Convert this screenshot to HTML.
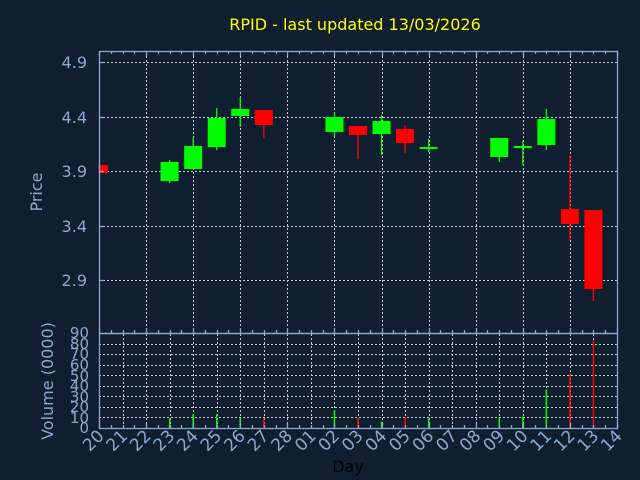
<!DOCTYPE html>
<html><head><meta charset="utf-8"><style>
html,body{margin:0;padding:0;background:#0f1f2f;}
svg{display:block}
text{font-family:"DejaVu Sans","Liberation Sans",sans-serif;}
</style></head><body>
<svg id="s" width="640" height="480" xmlns="http://www.w3.org/2000/svg">
<rect width="640" height="480" fill="#0f1f2f"/>
<g id="grid"></g>
<g id="cand"></g>
<rect x="99.5" y="51.5" width="518" height="282" fill="none" stroke="#8aa8d0" stroke-width="1.3"/>
<rect x="99.5" y="333.5" width="518" height="95" fill="none" stroke="#8aa8d0" stroke-width="1.3"/>
<g id="ticks"></g>
<text x="355" y="30" fill="#ffff00" font-size="16" text-anchor="middle">RPID - last updated 13/03/2026</text>
<g fill="#8aa8d0" font-size="16" text-anchor="end">
<text x="87" y="68">4.9</text><text x="87" y="123">4.4</text><text x="87" y="177">3.9</text><text x="87" y="232">3.4</text><text x="87" y="286">2.9</text>
</g>
<g fill="#8aa8d0" font-size="15" text-anchor="end">
<text x="89" y="433">0</text><text x="89" y="423">10</text><text x="89" y="412">20</text><text x="89" y="402">30</text><text x="89" y="391">40</text><text x="89" y="381">50</text><text x="89" y="370">60</text><text x="89" y="359">70</text><text x="89" y="349">80</text><text x="89" y="338">90</text>
</g>
<text transform="translate(42,192) rotate(-90)" fill="#8aa8d0" font-size="16" text-anchor="middle">Price</text>
<text transform="translate(53,381) rotate(-90)" fill="#8aa8d0" font-size="16" text-anchor="middle">Volume (0000)</text>
<text x="348" y="472" fill="#000" font-size="16" text-anchor="middle">Day</text>
<g fill="#8aa8d0" font-size="17" text-anchor="end">
<text transform="translate(105,437) rotate(-45)">20</text>
<text transform="translate(128.5,437) rotate(-45)">21</text>
<text transform="translate(152,437) rotate(-45)">22</text>
<text transform="translate(175.6,437) rotate(-45)">23</text>
<text transform="translate(199.2,437) rotate(-45)">24</text>
<text transform="translate(222.7,437) rotate(-45)">25</text>
<text transform="translate(246.3,437) rotate(-45)">26</text>
<text transform="translate(269.8,437) rotate(-45)">27</text>
<text transform="translate(293.4,437) rotate(-45)">28</text>
<text transform="translate(317,437) rotate(-45)">01</text>
<text transform="translate(340.5,437) rotate(-45)">02</text>
<text transform="translate(364,437) rotate(-45)">03</text>
<text transform="translate(387.6,437) rotate(-45)">04</text>
<text transform="translate(411.2,437) rotate(-45)">05</text>
<text transform="translate(434.7,437) rotate(-45)">06</text>
<text transform="translate(458.3,437) rotate(-45)">07</text>
<text transform="translate(481.8,437) rotate(-45)">08</text>
<text transform="translate(505.4,437) rotate(-45)">09</text>
<text transform="translate(529,437) rotate(-45)">10</text>
<text transform="translate(552.5,437) rotate(-45)">11</text>
<text transform="translate(576,437) rotate(-45)">12</text>
<text transform="translate(599.6,437) rotate(-45)">13</text>
<text transform="translate(623,437) rotate(-45)">14</text>
</g>
</svg>
<script>
var NS="http://www.w3.org/2000/svg";
function el(p,t,a){var e=document.createElementNS(NS,t);for(var k in a)e.setAttribute(k,a[k]);document.getElementById(p).appendChild(e);return e;}
var D=23.545,X0=99;
var dash={stroke:"#c8c8c8","stroke-width":1,"stroke-dasharray":"2,2"};
function L(p,x1,y1,x2,y2,s){var a={x1:x1,y1:y1,x2:x2,y2:y2};for(var k in s)a[k]=s[k];el(p,"line",a);}
[62,117,171,226,280].forEach(function(y){L("grid",99,y+.5,617,y+.5,dash);});
for(var i=2;i<22;i+=2){var x=Math.round(X0+i*D)+.5;L("grid",x,52,x,333,dash);}
for(var v=10;v<=80;v+=10){var y=Math.round(428-v*1.056)+.5;L("grid",99,y,617,y,dash);}
for(var i=1;i<22;i++){var x=Math.round(X0+i*D)+.5;L("grid",x,334,x,428,dash);}
var ax={stroke:"#8aa8d0","stroke-width":1.3};
for(var i=0;i<=44;i++){var x=Math.round(X0+i*D/2)+.5;var h=(i%4==0)?5:3;L("ticks",x,51,x,51+h,ax);L("ticks",x,428,x,428-h,ax);L("ticks",x,333,x,333-h,ax);}
[62,117,171,226,280].forEach(function(y){L("ticks",99,y+.5,104,y+.5,ax);});
var G="#00ff00",R="#ff0000";
var c=[[0,165,173,165,173,R,0],[3,162,181,160,183,G,9],[4,146,169,137,169,G,13],[5,118,147,108,150,G,13],[6,109,116,97,127,G,9],[7,110,125,110,138,R,9],[10,117,132,112,137,G,17],[11,126,135,126,159,R,9.4],[12,121,134,115,155,G,6],[13,129,143,125,153,R,10],[14,147,149,139,152,G,9],[17,138,157,138,162,G,10],[18,146,148,141,165,G,11],[19,119,145,109,150,G,36.5],[20,209,224,155,240,R,52],[21,210,289,210,301,R,83]];
c.forEach(function(d){var cx=X0+d[0]*D;var x0=Math.max(99,cx-9),x1=cx+9;
el("cand","line",{x1:cx,y1:d[3],x2:cx,y2:d[4],stroke:d[5],"stroke-width":1.3});
el("cand","rect",{x:x0,y:d[1],width:x1-x0,height:Math.max(2,d[2]-d[1]),fill:d[5]});
if(d[6]>0){el("cand","rect",{x:cx-0.75,y:428-d[6]*1.056,width:1.5,height:d[6]*1.056,fill:d[5]});}
});
</script>
</body></html>
